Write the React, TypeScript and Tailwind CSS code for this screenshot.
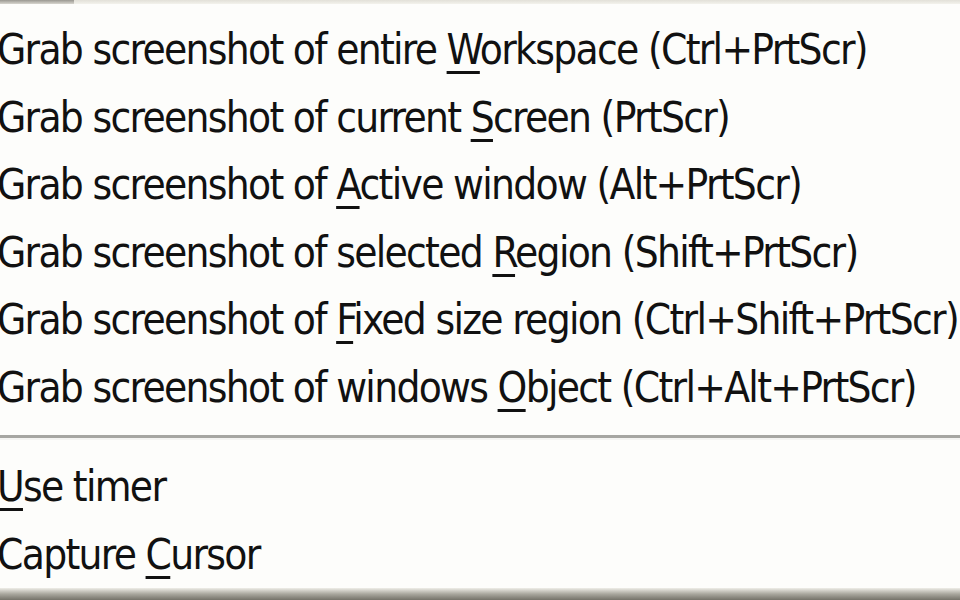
import React from 'react';

type Item = { pre: string; key: string; post: string };

const captureItems: Item[] = [
  { pre: 'Grab screenshot of entire ', key: 'W', post: 'orkspace (Ctrl+PrtScr)' },
  { pre: 'Grab screenshot of current ', key: 'S', post: 'creen (PrtScr)' },
  { pre: 'Grab screenshot of ', key: 'A', post: 'ctive window (Alt+PrtScr)' },
  { pre: 'Grab screenshot of selected ', key: 'R', post: 'egion (Shift+PrtScr)' },
  { pre: 'Grab screenshot of ', key: 'F', post: 'ixed size region (Ctrl+Shift+PrtScr)' },
  { pre: 'Grab screenshot of windows ', key: 'O', post: 'bject (Ctrl+Alt+PrtScr)' },
];

const optionItems: Item[] = [
  { pre: '', key: 'U', post: 'se timer' },
  { pre: 'Capture ', key: 'C', post: 'ursor' },
];

function MenuRow({ item }: { item: Item }) {
  return (
    <div className="h-[68px] flex items-center -ml-[3px] whitespace-nowrap">
      <span>
        {item.pre}
        <span className="underline decoration-[3px] underline-offset-[7px]">{item.key}</span>
        {item.post}
      </span>
    </div>
  );
}

export default function App() {
  return (
    <div
      className="w-[960px] h-[600px] overflow-hidden bg-[#fdfdfb] flex flex-col text-[#111] text-[42px] tracking-[-1.7px]"
      style={{ fontFamily: '"DejaVu Sans Condensed", "DejaVu Sans", sans-serif' }}
    >
      {/* top edge of the menu bar */}
      <div className="h-[4px] flex shrink-0">
        <div className="w-[74px] bg-gradient-to-b from-[#9a9891] to-[#d8d6cf]" />
        <div className="flex-1 bg-gradient-to-b from-[#e2e0d8] to-[#f3f2ec]" />
      </div>
      <div className="h-[12px] shrink-0" />

      {captureItems.map((it) => (
        <MenuRow key={it.key} item={it} />
      ))}

      {/* separator */}
      <div className="h-[32px] shrink-0 flex flex-col justify-center">
        <div className="h-[3px] bg-[#a6a6a2]" />
        <div className="h-[2px] bg-[#f4f4f2]" />
      </div>

      {optionItems.map((it) => (
        <MenuRow key={it.key} item={it} />
      ))}

      <div className="flex-1" />
      {/* bottom shadow */}
      <div className="h-[12px] shrink-0 bg-gradient-to-b from-[#efeee8] via-[#a9a79e] to-[#75736a]" />
    </div>
  );
}
